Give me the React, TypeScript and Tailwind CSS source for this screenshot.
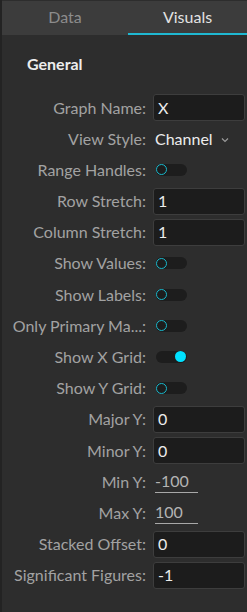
import React from 'react';

type Row =
  | { label: string; kind: 'input'; value: string }
  | { label: string; kind: 'select'; value: string }
  | { label: string; kind: 'switch'; on: boolean }
  | { label: string; kind: 'underline'; value: string };

const rows: Row[] = [
  { label: 'Graph Name:', kind: 'input', value: 'X' },
  { label: 'View Style:', kind: 'select', value: 'Channel' },
  { label: 'Range Handles:', kind: 'switch', on: false },
  { label: 'Row Stretch:', kind: 'input', value: '1' },
  { label: 'Column Stretch:', kind: 'input', value: '1' },
  { label: 'Show Values:', kind: 'switch', on: false },
  { label: 'Show Labels:', kind: 'switch', on: false },
  { label: 'Only Primary Ma...:', kind: 'switch', on: false },
  { label: 'Show X Grid:', kind: 'switch', on: true },
  { label: 'Show Y Grid:', kind: 'switch', on: false },
  { label: 'Major Y:', kind: 'input', value: '0' },
  { label: 'Minor Y:', kind: 'input', value: '0' },
  { label: 'Min Y:', kind: 'underline', value: '-100' },
  { label: 'Max Y:', kind: 'underline', value: '100' },
  { label: 'Stacked Offset:', kind: 'input', value: '0' },
  { label: 'Significant Figures:', kind: 'input', value: '-1' },
];

function Toggle({ on }: { on: boolean }) {
  return (
    <div className="relative w-[31px] h-[12px] rounded-full bg-[#1d1d1d]">
      {on ? (
        <div className="absolute right-[1px] top-[-0.5px] w-[11px] h-[11px] rounded-full bg-[#00e1ff]" />
      ) : (
        <div className="absolute left-[0px] top-[0.5px] w-[11px] h-[11px] rounded-full border-[1.5px] border-[#19b8cc] bg-[#1d1d1d]" />
      )}
    </div>
  );
}

function Control({ row }: { row: Row }) {
  switch (row.kind) {
    case 'input':
      return (
        <div className="h-[27px] w-[92px] rounded-[3px] border border-[#3d3d3d] bg-[#1c1c1c] flex items-center pl-[4px] text-[#ececec]">
          {row.value}
        </div>
      );
    case 'select':
      return (
        <div className="flex items-center pl-[2px] text-[#ececec]">
          <span>{row.value}</span>
          <svg width="10" height="10" viewBox="0 0 10 10" className="ml-[7px] mt-[2px]">
            <path d="M2 3.5 L5 6.5 L8 3.5" fill="none" stroke="#9a9a9a" strokeWidth="1.2" />
          </svg>
        </div>
      );
    case 'switch':
      return (
        <div className="pl-[3px]">
          <Toggle on={row.on} />
        </div>
      );
    case 'underline':
      return (
        <div className="ml-[2px] w-[43px] border-b border-[#a8a8a8] text-[#b4b4b4] leading-[22px]">
          {row.value}
        </div>
      );
  }
}

export default function App() {
  return (
    <div
      className="w-[247px] h-[612px] bg-[#2d2d2d] border-l-2 border-[#232323] flex flex-col text-[16px]"
      style={{ fontFamily: 'Lato, "Open Sans", sans-serif' }}
    >
      <div className="mt-[1px] h-[34px] bg-[#3c3c3c] flex">
        <div className="w-[126px] flex items-center justify-center text-[#8c8c8c] pb-[2px]">Data</div>
        <div className="flex-1 flex items-center justify-center text-[#e2e2e2] border-b-2 border-[#1fb8d2]">Visuals</div>
      </div>
      <div className="pl-[25px] pt-[17px] leading-[24px] font-bold text-[#ededed]">General</div>
      <div className="mt-[18px] flex flex-col gap-[4.2px]">
        {rows.map((row) => (
          <div key={row.label} className="h-[27px] flex items-center">
            <div className="w-[151px] pr-[7px] text-right text-[#a2a2a2] whitespace-nowrap">{row.label}</div>
            <Control row={row} />
          </div>
        ))}
      </div>
    </div>
  );
}
